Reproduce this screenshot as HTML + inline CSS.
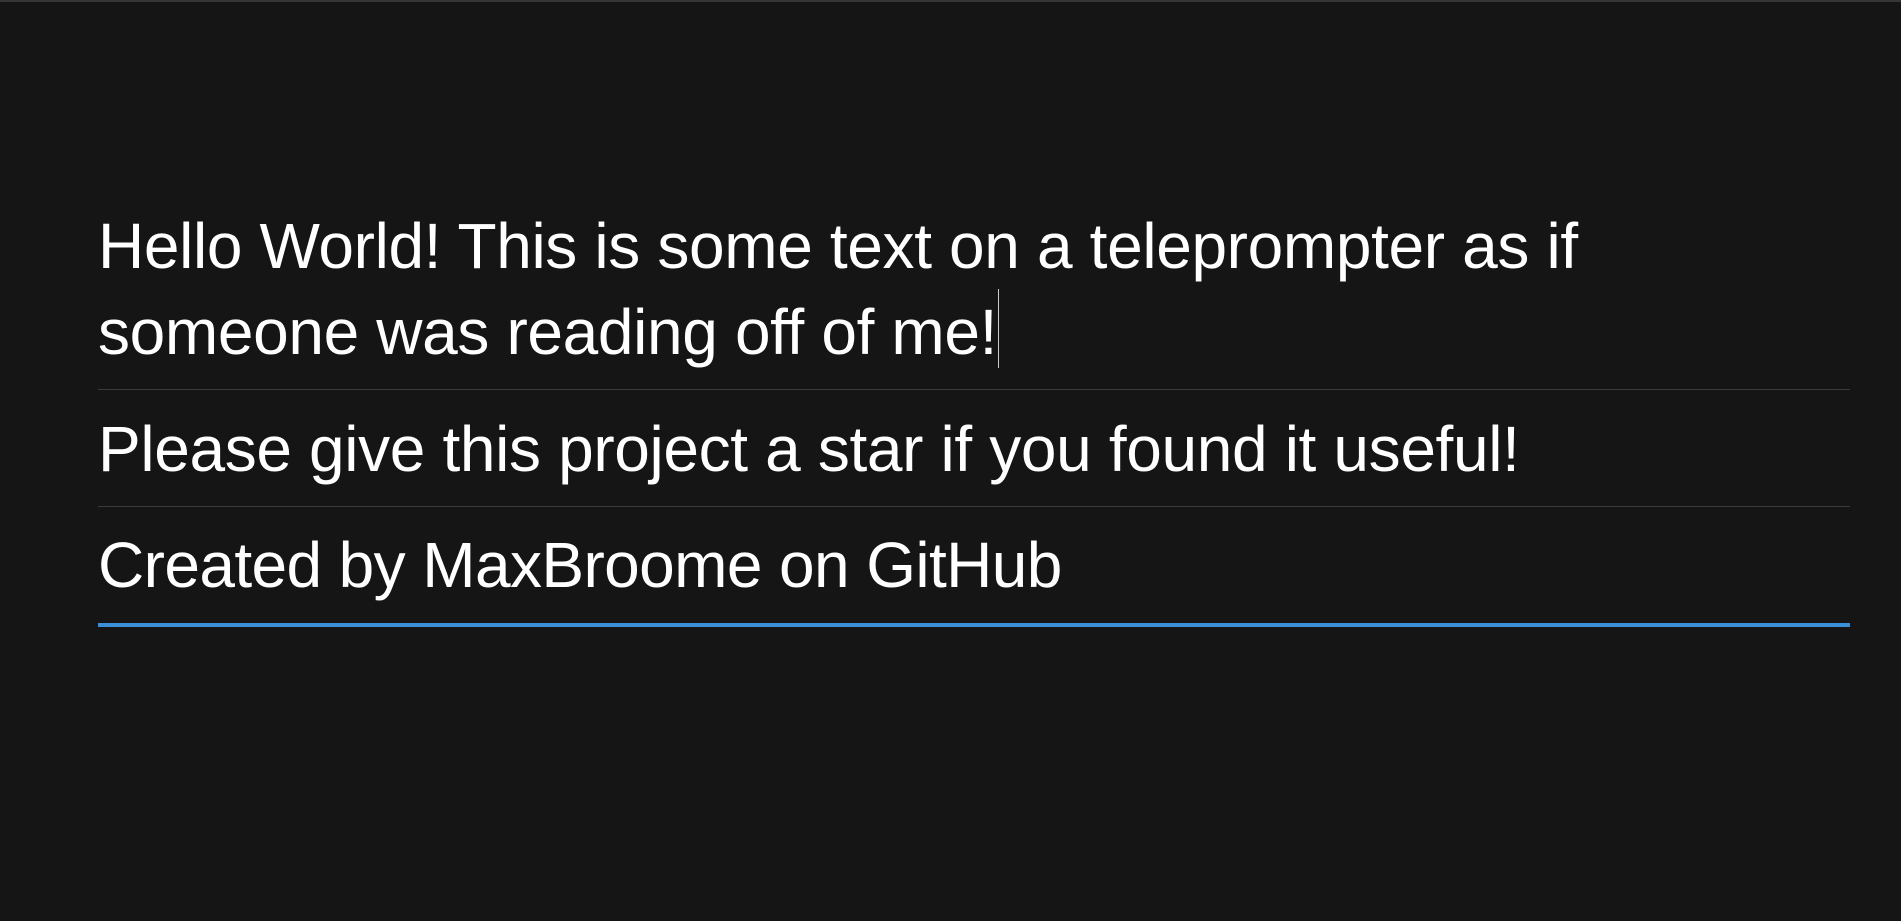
<!DOCTYPE html>
<html><head><meta charset="utf-8"><style>
html,body{margin:0;padding:0;width:1901px;height:921px;background:#151515;overflow:hidden}
body{border-top:2px solid #363636;box-sizing:border-box;position:relative;font-family:"Liberation Sans",sans-serif;color:#fff}
.t{position:absolute;left:98px;font-size:64px;line-height:85px;white-space:nowrap;letter-spacing:-0.35px}
.d{position:absolute;left:98px;width:1752px;height:1px;background:#3a3a3a}
.cur{display:inline-block;width:1px;height:79px;background:#ccc;vertical-align:-14px;margin-left:1px}
</style></head><body>
<div class="t" style="top:202px">Hello World! This is some text on a teleprompter as if<br>someone was reading off of me!<span class="cur"></span></div>
<div class="d" style="top:387px"></div>
<div class="t" style="top:405px">Please give this project a star if you found it useful!</div>
<div class="d" style="top:504px"></div>
<div class="t" style="top:521px;letter-spacing:-0.6px">Created by MaxBroome on GitHub</div>
<div class="d" style="top:621px;height:4px;background:#3b8fd9"></div>
</body></html>
